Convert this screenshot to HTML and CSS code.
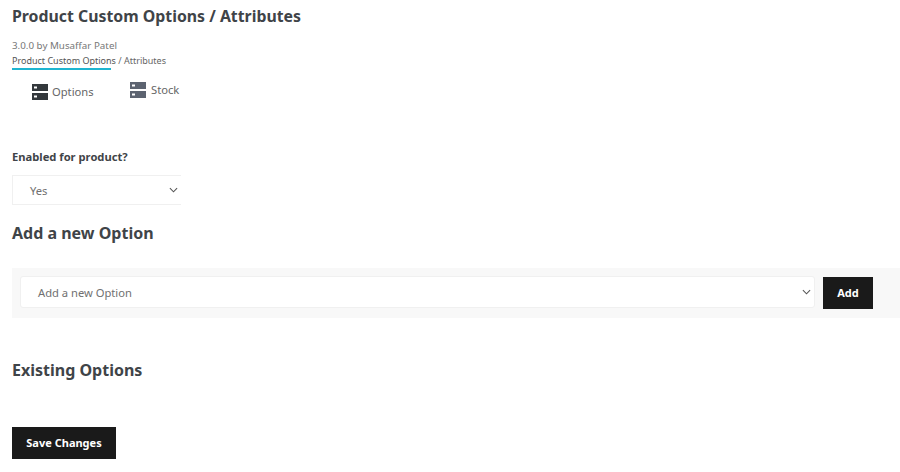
FILE: index.html
```html
<!DOCTYPE html>
<html lang="en">
<head>
   <meta charset="UTF-8">
   <meta name="viewport" content="width=device-width, initial-scale=1.0">
   <title>Product Custom Options / Attributes</title>
   <link rel="stylesheet" href="styles.css">
</head>
<body>
    <h2 class="title">Product Custom Options / Attributes</h2>
    <div class="meta">3.0.0 by Musaffar Patel</div>
    <div class="crumbs"><span class="crumbs_active">Product Custom Options</span> / Attributes</div>
    <div class="crumbs_line"></div>
    <div class="tabs">
        <div class="tab tab_active">
            <svg class="tab_icon" viewBox="0 0 16 16"><path fill-rule="evenodd" d="M0 0h16v7H0zM0 9h16v7H0zM2 2.5v2h3v-2zM2 11.5v2h3v-2z"/></svg>
            <span class="tab_text">Options</span>
        </div>
        <div class="tab">
            <svg class="tab_icon" viewBox="0 0 16 16"><path fill-rule="evenodd" d="M0 0h16v7H0zM0 9h16v7H0zM2 2.5v2h3v-2zM2 11.5v2h3v-2z"/></svg>
            <span class="tab_text">Stock</span>
        </div>
    </div>
    <label class="field_label">Enabled for product?</label>
    <div class="select select_small">
        <span>Yes</span>
        <svg class="chevron" viewBox="0 0 10 6"><path d="M1 1l4 4 4-4"/></svg>
    </div>
    <h3 class="heading heading_add">Add a new Option</h3>
    <div class="add_panel">
        <div class="select select_wide">
            <span>Add a new Option</span>
            <svg class="chevron" viewBox="0 0 10 6"><path d="M1 1l4 4 4-4"/></svg>
        </div>
        <button class="btn btn_add">Add</button>
    </div>
    <h3 class="heading heading_existing">Existing Options</h3>
    <button class="btn btn_save">Save Changes</button>
</body>
</html>
```

FILE: styles.css
```css
body {
    margin: 0;
    padding: 0 0 0 12px;
    background: #fff;
    color: #3f4448;
    font-family: "Noto Sans", "Open Sans", sans-serif;
}
.title {
    margin: 0;
    padding-top: 5px;
    font-size: 15.85px;
    line-height: 22px;
    font-weight: 700;
}
.meta {
    margin-top: 12px;
    font-size: 9.8px;
    line-height: 14px;
    color: #777;
}
.crumbs {
    margin-top: 1px;
    font-size: 9px;
    line-height: 14px;
    color: #666;
}
.crumbs_active {
    color: #555;
}
.crumbs_line {
    width: 99px;
    height: 2px;
    background: #1fb5d0;
}
.tabs {
    display: flex;
    align-items: flex-start;
    height: 80px;
    padding-left: 20px;
    font-size: 11.2px;
    color: #666;
}
.tab {
    display: flex;
    align-items: center;
    gap: 5px;
    width: 98px;
    margin-top: 10px;
    height: 20px;
}
.tab_text {
    padding-bottom: 2px;
}
.tab_active {
    gap: 4px;
    margin-top: 12px;
}
.tab_icon {
    width: 16px;
    height: 16px;
    fill: #5c6370;
}
.tab_active .tab_icon {
    fill: #33383c;
}
.field_label {
    display: block;
    font-size: 11.2px;
    line-height: 14px;
    font-weight: 700;
}
.select {
    display: flex;
    justify-content: space-between;
    align-items: center;
    box-sizing: border-box;
    background: #fff;
    font-size: 11.2px;
    color: #707070;
    border: 1px solid #f0f0f0;
}
.select_small {
    width: 169px;
    height: 30px;
    margin-top: 11px;
    padding: 0 3px 0 17px;
    border-right: 0;
}
.select_wide {
    flex: none;
    width: 795px;
    height: 32px;
    margin-bottom: 2px;
    padding: 0 3px 0 17px;
    border-radius: 3px;
}
.chevron {
    width: 9px;
    height: 6px;
    fill: none;
    stroke: #555;
    stroke-width: 1.2;
}
.heading {
    margin: 0;
    font-size: 16px;
    line-height: 22px;
    font-weight: 700;
}
.heading_add {
    margin-top: 17px;
}
.add_panel {
    display: flex;
    align-items: center;
    gap: 8px;
    height: 50px;
    margin-top: 24px;
    padding-left: 8px;
    background: #f8f8f8;
}
.btn {
    display: block;
    border: 0;
    padding: 0 0 2px;
    background: #1a1a1a;
    color: #fff;
    font-family: inherit;
    font-size: 11px;
    font-weight: 700;
    cursor: pointer;
}
.btn_add {
    width: 50px;
    height: 32px;
}
.btn_save {
    width: 104px;
    height: 32px;
    margin-top: 46px;
}
.heading_existing {
    margin-top: 41px;
}
```
